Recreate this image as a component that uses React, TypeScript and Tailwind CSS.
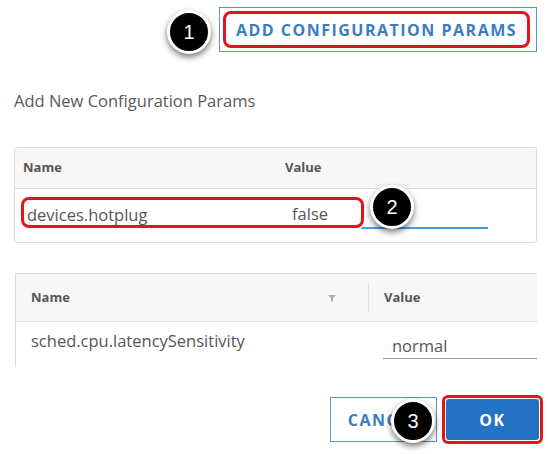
import React from "react";

function Marker({ n, className }: { n: string; className: string }) {
  return (
    <div
      className={`absolute w-[44px] h-[44px] rounded-full bg-black border-[3px] border-white shadow-[0_3px_6px_rgba(0,0,0,0.55)] flex items-center justify-center text-white text-[20px] font-['Liberation_Sans',sans-serif] ${className}`}
    >
      {n}
    </div>
  );
}

export default function App() {
  return (
    <div className="relative w-[548px] h-[454px] bg-white overflow-hidden font-['Open_Sans',sans-serif] text-[#565656]">
      <div className="flex justify-end pt-[7px] pr-[11px]">
        <button className="w-[318px] h-[45px] border border-[#5a93cf] p-[3px] pr-[6px] bg-white">
          <div className="h-full rounded-[8px] border-[3px] border-[#e3141b] flex items-center justify-center text-[#3a7dc2] font-bold text-[16px] tracking-[1.5px]">
            ADD CONFIGURATION PARAMS
          </div>
        </button>
      </div>

      <h2 className="mt-[39px] ml-[14px] text-[16.5px] leading-[20px] text-[#5a5a5a]">
        Add New Configuration Params
      </h2>

      <div className="mt-[36px] ml-[14px] w-[523px] border border-[#dcdcdc] rounded-[3px]">
        <div className="grid grid-cols-[270px_1fr] h-[41px] items-center bg-[#f7f7f7] border-b border-[#dcdcdc] text-[13px] font-bold">
          <span className="pl-[8px]">Name</span>
          <span>Value</span>
        </div>
        <div className="relative grid grid-cols-[270px_1fr] h-[53px] pt-[12px] items-start text-[16.5px]">
          <div className="h-[28px] flex items-center pl-[12px]">devices.hotplug</div>
          <div className="w-[203px] h-[28px] flex items-center pl-[7px] border-b-2 border-[#4a9de0]">false</div>
          <div className="absolute left-[6px] top-[8px] w-[343px] h-[31px] border-[3px] border-[#e3141b] rounded-[8px] shadow-[0_0_0_2px_white]" />
        </div>
      </div>

      <div className="mt-[30px] ml-[15px] w-[522px] h-[94px] border-l border-t border-[#dcdcdc] overflow-hidden">
        <div className="flex items-center h-[48px] bg-[#f7f7f7] border-b border-[#dcdcdc] text-[13px] font-bold">
          <div className="w-[352px] flex items-center justify-between pl-[15px] pr-[32px]">
            <span>Name</span>
            <svg width="8" height="8" viewBox="0 0 8 8">
              <path d="M0 1h8L5 4.5V8L3 7V4.5Z" fill="#b0b0b0" />
            </svg>
          </div>
          <div className="w-px h-[30px] bg-[#e2e2e2]" />
          <span className="pl-[15px]">Value</span>
        </div>
        <div className="flex items-start text-[16.5px]">
          <div className="w-[352px] pl-[15px] pt-[9px] leading-[20px]">sched.cpu.latencySensitivity</div>
          <div className="flex-1 pl-[15px] pt-[12px]">
            <div className="h-[25px] flex items-center pl-[9px] border-b border-[#9a9a9a]">normal</div>
          </div>
        </div>
      </div>

      <div className="mt-[28px] flex justify-end items-center gap-[5px] pr-[5px]">
        <button className="w-[107px] h-[45px] border border-[#5a93cf] bg-white text-[#3a7dc2] font-bold text-[16px] tracking-[1.5px]">
          CANCEL
        </button>
        <div className="w-[101px] h-[49px] rounded-[6px] border-[3px] border-[#e3141b] p-[1px]">
          <button className="w-full h-full rounded-[3px] bg-[#2473c2] text-white font-bold text-[16px] tracking-[1.5px]">
            OK
          </button>
        </div>
      </div>

      <Marker n="1" className="left-[167px] top-[10px]" />
      <Marker n="2" className="left-[370px] top-[185px]" />
      <Marker n="3" className="left-[391px] top-[399px]" />
    </div>
  );
}
